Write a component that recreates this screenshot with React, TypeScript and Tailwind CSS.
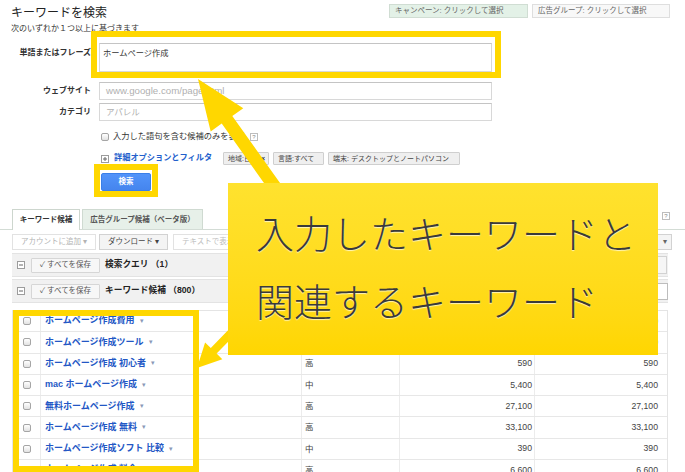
import type { ReactNode } from "react";

type KeywordRow = {
  keyword: string;
  competition: string;
  global: string;
  local: string;
};

const keywordRows: KeywordRow[] = [
  { keyword: "ホームページ作成費用", competition: "高", global: "1,300", local: "1,300" },
  { keyword: "ホームページ作成ツール", competition: "中", global: "880", local: "880" },
  { keyword: "ホームページ作成 初心者", competition: "高", global: "590", local: "590" },
  { keyword: "mac ホームページ作成", competition: "中", global: "5,400", local: "5,400" },
  { keyword: "無料ホームページ作成", competition: "高", global: "27,100", local: "27,100" },
  { keyword: "ホームページ作成 無料", competition: "高", global: "33,100", local: "33,100" },
  { keyword: "ホームページ作成ソフト 比較", competition: "中", global: "390", local: "390" },
  { keyword: "ホームページ作成 料金", competition: "高", global: "6,600", local: "6,600" },
];

function Checkbox() {
  return (
    <span className="inline-block h-[8px] w-[8px] shrink-0 rounded-[2px] border border-[#a5a5a5] bg-linear-to-b from-white to-[#e2e2e2]" />
  );
}

function ToggleIcon({ plus = false }: { plus?: boolean }) {
  return (
    <svg width="8" height="8" viewBox="0 0 8 8" className="shrink-0">
      <rect x="0.5" y="0.5" width="7" height="7" fill="#fff" stroke="#9c9c9c" />
      <path d="M2 4h4" stroke="#666" />
      {plus && <path d="M4 2v4" stroke="#666" />}
    </svg>
  );
}

function Help() {
  return (
    <span className="inline-flex h-[8px] w-[8px] items-center justify-center border border-[#bdbdbd] text-[6px] leading-none text-[#888]">
      ?
    </span>
  );
}

function Chip({ children, width }: { children: ReactNode; width: string }) {
  return (
    <span
      className={`flex h-[13px] items-center rounded-[1px] border border-[#cfcfcf] bg-[#efefef] pl-[4px] text-[7px] leading-none text-[#444] ${width}`}
    >
      {children}
    </span>
  );
}

function GroupRow({ title, count, tail }: { title: string; count: string; tail: ReactNode }) {
  return (
    <div className="flex h-[24px] items-center border-y border-[#e3e3e3] bg-[#f1f1f1] pl-[5px]">
      <ToggleIcon />
      <button
        type="button"
        className="ml-[6px] flex h-[15px] w-[69px] items-center justify-center rounded-[1px] border border-[#d6d6d6] bg-[#f7f7f7] text-[7.5px] leading-none text-[#555]"
      >
        ✓ すべてを保存
      </button>
      <span className="ml-[5px] text-[8.7px] font-bold text-[#222]">
        {title} {count}
      </span>
      <div className="ml-auto">{tail}</div>
    </div>
  );
}

export default function App() {
  return (
    <div className="relative h-[472px] w-[685px] overflow-hidden bg-white font-['Liberation_Sans','Noto_Sans_CJK_JP',sans-serif] text-[#333]">
      <header className="flex items-start justify-between pl-[11px] pr-[15px] pt-[4px]">
        <div>
          <h1 className="text-[12px] leading-[18px] text-[#222]">キーワードを検索</h1>
          <p className="mt-[2px] text-[8px] leading-[10px] text-[#333]">次のいずれか１つ以上に基づきます</p>
        </div>
        <div className="flex gap-[4px]">
          <button
            type="button"
            className="h-[14px] w-[139px] border border-[#d0ddd3] bg-[#e3f1e7] pl-[5px] text-left text-[7.5px] leading-[12px] text-[#666]"
          >
            キャンペーン: クリックして選択
          </button>
          <button
            type="button"
            className="h-[14px] w-[138px] border border-[#dedede] bg-[#f8f8f8] pl-[5px] text-left text-[7.5px] leading-[12px] text-[#666]"
          >
            広告グループ: クリックして選択
          </button>
        </div>
      </header>

      <div className="mt-[9px] grid grid-cols-[91px_393px] gap-x-[8px]">
        <label className="pt-[5px] text-right text-[8px] font-bold leading-[10px] text-[#333]">単語またはフレーズ</label>
        <div className="h-[29px] border border-[#d8d8d8] border-t-[#c4c4c4] pl-[3px] pt-[5px] text-[8.25px] leading-[10px] text-[#333]">
          ホームページ作成
        </div>

        <label className="mt-[10px] text-right text-[8px] font-bold leading-[18px] text-[#333]">ウェブサイト</label>
        <div className="mt-[10px] h-[18px] border border-[#d8d8d8] border-t-[#c4c4c4] pl-[6px] text-[9.7px] leading-[16px] text-[#b0b0b0]">
          www.google.com/page.html
        </div>

        <label className="mt-[3px] text-right text-[8px] font-bold leading-[18px] text-[#333]">カテゴリ</label>
        <div className="mt-[3px] h-[18px] border border-[#d8d8d8] border-t-[#c4c4c4] pl-[6px] text-[8.5px] leading-[16px] text-[#b0b0b0]">
          アパレル
        </div>

        <div />
        <div className="mt-[10px] flex h-[12px] items-center pl-[2px] text-[8.25px] text-[#333]">
          <Checkbox />
          <span className="ml-[4px]">入力した語句を含む候補のみを表示</span>
          <span className="ml-[5px] flex">
            <Help />
          </span>
        </div>

        <div />
        <div className="mt-[9px] flex h-[13px] items-center pl-[2px]">
          <ToggleIcon plus />
          <span className="ml-[5px] text-[8.2px] font-bold text-[#2260cc]">詳細オプションとフィルタ</span>
          <div className="ml-[11px] flex gap-[4px]">
            <Chip width="w-[46px]">
              地域:日本 <span className="ml-[3px] font-bold text-[#333]">×</span>
            </Chip>
            <Chip width="w-[51px]">言語:すべて</Chip>
            <Chip width="w-[132px]">端末: デスクトップとノートパソコン</Chip>
          </div>
        </div>

        <div />
        <div className="mt-[8px] flex pl-[2px]">
          <button
            type="button"
            className="h-[18px] w-[50px] rounded-[2px] border border-[#3a7fe8] bg-linear-to-b from-[#5294fa] to-[#4585ee] text-[7.5px] font-bold leading-none text-white"
          >
            検索
          </button>
        </div>
      </div>

      <div className="mt-[18px] flex h-[21px] items-end border-b border-[#d3dcd5] pl-[12px]">
        <div className="-mb-px flex h-[21px] w-[68px] items-center justify-center border border-b-0 border-[#cdd6ce] bg-white text-[7.5px] font-bold text-[#333]">
          キーワード候補
        </div>
        <div className="ml-[2px] flex h-[20px] w-[121px] items-center justify-center border border-b-0 border-[#cfdad1] bg-[#e7f0e9] text-[7.5px] font-bold text-[#555]">
          広告グループ候補（ベータ版）
        </div>
        <div className="mb-[9px] ml-auto mr-[15px] flex">
          <Help />
        </div>
      </div>

      <div className="mt-[4px] flex h-[16px] pl-[12px] text-[7.5px]">
        <button type="button" className="w-[84px] border border-[#e2e2e2] bg-white text-[#b3b3b3]">
          アカウントに追加 ▾
        </button>
        <button type="button" className="ml-[3px] w-[69px] border border-[#d2d2d2] bg-[#f4f4f4] text-[#444]">
          ダウンロード ▾
        </button>
        <button type="button" className="ml-[5px] w-[140px] border border-[#e2e2e2] bg-white pl-[8px] text-left text-[#bdbdbd]">
          テキストで表示を絞り込み
        </button>
        <button type="button" className="ml-auto mr-[13px] w-[60px] border border-[#d2d2d2] bg-[#f4f4f4] pr-[4px] text-right text-[#666]">
          ▾
        </button>
      </div>

      <div className="ml-[12px] mt-[3px] w-[656px]">
        <GroupRow
          title="検索クエリ"
          count="（1）"
          tail={<span className="mr-[1px] block h-[18px] w-[50px] border border-[#d2d2d2] bg-[#f6f6f6]" />}
        />
        <div className="mt-[2px]">
          <GroupRow
            title="キーワード候補"
            count="（800）"
            tail={<span className="block h-[17px] w-[120px] border border-[#bdbdbd] bg-white" />}
          />
        </div>
      </div>

      <div className="ml-[12px] mt-[7px] w-[656px] border-x border-t border-[#e4e4e4]">
        {keywordRows.map((row) => (
          <div
            key={row.keyword}
            className="grid h-[21.3px] grid-cols-[28px_261px_98px_135px_132px] border-b border-[#e7e7e7]"
          >
            <div className="flex items-center justify-center border-r border-[#ececec]">
              <Checkbox />
            </div>
            <div className="flex items-center border-r border-[#ececec] pl-[4px] text-[9px] font-bold text-[#2357c5]">
              {row.keyword}
              <span className="ml-[5px] text-[7px] font-normal text-[#8a99b8]">▾</span>
            </div>
            <div className="flex items-center border-r border-[#ececec] pl-[3px] text-[8.5px] text-[#444]">
              {row.competition}
            </div>
            <div className="flex items-center justify-end border-r border-[#ececec] pr-[2px] text-[8.7px] text-[#444]">
              {row.global}
            </div>
            <div className="flex items-center justify-end pr-[9px] text-[8.7px] text-[#444]">{row.local}</div>
          </div>
        ))}
      </div>

      {/* yellow highlight frames */}
      <div className="absolute left-[91px] top-[31px] h-[47px] w-[410px] border-[6px] border-[#FFD700]" />
      <div className="absolute left-[94px] top-[164px] h-[33px] w-[64px] border-[6px] border-[#FFD700]" />
      <div className="absolute left-[13px] top-[310px] h-[162px] w-[186px] border-[6px] border-[#FFD700]" />

      <svg className="pointer-events-none absolute left-0 top-0" width="685" height="472" viewBox="0 0 685 472">
        <polygon
          fill="#FFD700"
          points="198,79 243.3,108.2 232.3,116 284.5,189.3 273.9,196.9 221.7,123.6 210.7,131.4"
        />
        <polygon
          fill="#FFD700"
          points="197,368 205.1,342.4 210.8,348 232.4,325.8 238.2,331.4 216.6,353.6 222.3,359.2"
        />
      </svg>

      <div className="absolute left-[228px] top-[183px] h-[172px] w-[430px] bg-linear-to-b from-[#FFE22E] to-[#FFD600] pl-[28px] pt-[15px] font-['Noto_Sans_CJK_JP',sans-serif] text-[38px] font-light leading-[68px] text-[#3a3a3a] [text-shadow:0_1px_1px_rgba(255,255,255,0.7)]">
        <p>入力したキーワードと</p>
        <p>関連するキーワード</p>
      </div>
    </div>
  );
}
